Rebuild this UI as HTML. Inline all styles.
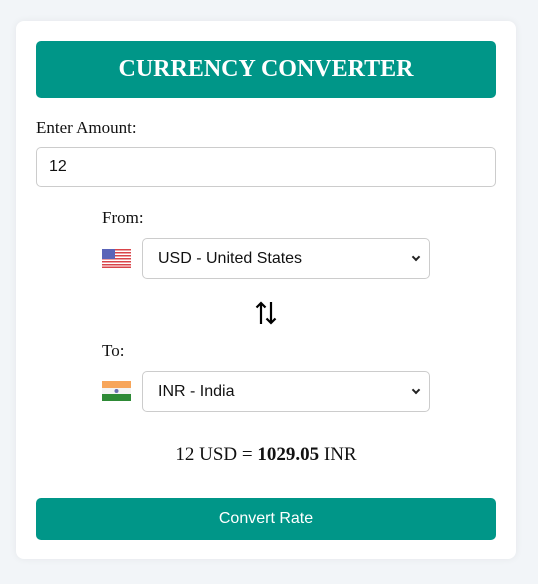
<!DOCTYPE html>
<html><head><style>
body{margin:0;background:#f2f5f8;width:538px;height:584px;position:relative;font-family:"Liberation Serif",serif;}
.card{position:absolute;left:16px;top:21px;width:500px;height:538px;background:#fff;border-radius:8px;box-shadow:0 0 8px rgba(0,0,0,.06);}
.abs{position:absolute;}
.hdr{left:20px;top:20px;width:460px;height:57px;background:#009688;border-radius:5px;color:#fff;font-weight:bold;font-size:24px;text-align:center;line-height:57px;}
.lbl{font-size:17px;color:#111;}
.inp{border:1px solid #ccc;border-radius:5px;box-sizing:border-box;background:#fff;font-family:"Liberation Sans",sans-serif;font-size:16px;color:#111;}
.sel{left:126px;width:288px;height:41px;line-height:39px;padding-left:15px;}
.chev{position:absolute;right:10px;top:15px;width:4px;height:4px;border-right:2px solid #222;border-bottom:2px solid #222;transform:rotate(45deg);}
.btn{left:20px;top:477px;width:460px;height:42px;background:#009688;border-radius:5px;color:#fff;font-family:"Liberation Sans",sans-serif;font-size:16px;text-align:center;line-height:42px;}
</style></head><body>
<div class="card">
<div class="abs hdr">CURRENCY CONVERTER</div>
<div class="abs lbl" style="left:20px;top:97px">Enter Amount:</div>
<div class="abs inp" style="left:20px;top:126px;width:460px;height:40px;line-height:38px;padding-left:12px">12</div>
<div class="abs lbl" style="left:86px;top:187px">From:</div>
<svg class="abs" style="left:86px;top:228px" width="29" height="19" viewBox="0 0 29 19">
<rect width="29" height="19" fill="#fff"/>
<g fill="#d9444a"><rect y="0" width="29" height="1.5"/><rect y="3" width="29" height="1.5"/><rect y="6" width="29" height="1.5"/><rect y="9" width="29" height="1.5"/><rect y="12" width="29" height="1.5"/><rect y="15" width="29" height="1.5"/><rect y="17.5" width="29" height="1.5"/></g>
<rect width="13" height="10" fill="#5a64b8"/></svg>
<div class="abs inp sel" style="top:217px">USD - United States<span class="chev"></span></div>
<svg class="abs" style="left:239px;top:280px" width="22" height="24" viewBox="0 0 22 24" fill="none" stroke="#000" stroke-width="2.2">
<path d="M6 23V2M1.5 6.5L6 2l4.5 4.5"/><path d="M16 1v21M11.5 17.5L16 22l4.5-4.5"/></svg>
<div class="abs lbl" style="left:86px;top:320px">To:</div>
<svg class="abs" style="left:86px;top:360px" width="29" height="20" viewBox="0 0 29 20">
<rect width="29" height="7" fill="#f7a55a"/><rect y="7" width="29" height="6" fill="#f4f4f4"/><rect y="13" width="29" height="7" fill="#2e8a36"/><circle cx="14.5" cy="10" r="2" fill="#6b6fb0"/></svg>
<div class="abs inp sel" style="top:350px">INR - India<span class="chev"></span></div>
<div class="abs" style="left:0;width:500px;text-align:center;top:423px;font-size:19px;color:#111">12 USD = <b>1029.05</b> INR</div>
<div class="abs btn">Convert Rate</div>
</div>
</body></html>
